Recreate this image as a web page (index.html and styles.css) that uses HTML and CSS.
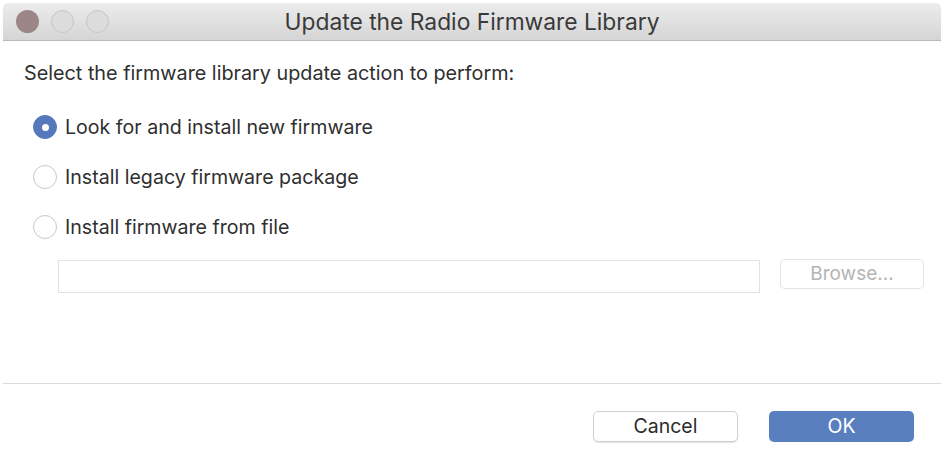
FILE: index.html
```html
<!DOCTYPE html>
<html>
<head>
<meta charset="utf-8">
<link rel="stylesheet" href="styles.css">
</head>
<body>
<div class="window">
  <div class="titlebar">
    <div class="lights">
      <span class="light red"></span>
      <span class="light gray"></span>
      <span class="light gray"></span>
    </div>
    <div class="title">Update the Radio Firmware Library</div>
  </div>
  <div class="content">
    <p class="prompt">Select the firmware library update action to perform:</p>
    <div class="options">
      <label class="option"><span class="radio checked"></span>Look for and install new firmware</label>
      <label class="option"><span class="radio"></span>Install legacy firmware package</label>
      <label class="option"><span class="radio"></span>Install firmware from file</label>
    </div>
    <div class="filerow">
      <div class="field"></div>
      <div class="browse">Browse...</div>
    </div>
  </div>
  <div class="separator"></div>
  <div class="footer">
    <div class="btn cancel">Cancel</div>
    <div class="btn ok">OK</div>
  </div>
</div>
</body>
</html>
```
FILE: styles.css
```css
html, body {
  margin: 0;
  padding: 0;
  background: #ffffff;
}
body {
  width: 945px;
  height: 474px;
  overflow: hidden;
  font-family: Inter, "Liberation Sans", Arial, sans-serif;
  color: #2b2b2b;
}
.window {
  margin: 3px 4px 0 3px;
  height: 471px;
  display: flex;
  flex-direction: column;
}
.titlebar {
  height: 37px;
  background: linear-gradient(#ececec, #d5d5d5);
  border-bottom: 1px solid #b9b9b9;
  border-radius: 5px 5px 0 0;
  display: flex;
  align-items: center;
  position: relative;
}
.lights {
  display: flex;
  gap: 12px;
  padding-left: 13px;
}
.light {
  width: 23px;
  height: 23px;
  border-radius: 50%;
  box-sizing: border-box;
}
.light.red {
  background: #9c8788;
}
.light.gray {
  background: #dcdcdc;
  border: 1px solid #c6c6c6;
}
.title {
  position: absolute;
  left: 0;
  right: 0;
  top: 0;
  line-height: 38px;
  text-align: center;
  font-size: 22.8px;
  color: #3a3a3a;
  pointer-events: none;
}
.content {
  padding: 20px 0 0 21px;
  height: 342px;
  box-sizing: border-box;
}
.prompt {
  margin: 0;
  font-size: 19.8px;
  line-height: 24px;
  color: #2f2f2f;
}
.options {
  margin-top: 30px;
  display: flex;
  flex-direction: column;
  gap: 26px;
}
.option {
  display: flex;
  align-items: center;
  gap: 8px;
  font-size: 19.6px;
  line-height: 24px;
  color: #2f2f2f;
  padding-left: 9px;
}
.radio {
  width: 24px;
  height: 24px;
  border-radius: 50%;
  box-sizing: border-box;
  border: 1px solid #c8c8c8;
  background: #ffffff;
  display: flex;
  align-items: center;
  justify-content: center;
}
.radio.checked {
  background: #5679bd;
  border-color: #5679bd;
}
.radio.checked::after {
  content: "";
  width: 7px;
  height: 7px;
  border-radius: 50%;
  background: #ffffff;
}
.filerow {
  margin-top: 21px;
  display: flex;
  align-items: flex-start;
  padding-left: 34px;
  gap: 20px;
}
.field {
  width: 702px;
  height: 33px;
  box-sizing: border-box;
  border: 1px solid #e2e2e2;
}
.browse {
  width: 144px;
  height: 30px;
  margin-top: -1px;
  box-sizing: border-box;
  border: 1px solid #e2e2e2;
  border-radius: 5px;
  text-align: center;
  line-height: 28px;
  font-size: 19px;
  color: #b4b4b4;
}
.separator {
  height: 0;
  border-top: 1px solid #dcdcdc;
}
.footer {
  display: flex;
  justify-content: flex-end;
  gap: 31px;
  padding: 27px 27px 0 0;
}
.btn {
  width: 145px;
  height: 31px;
  box-sizing: border-box;
  border-radius: 5px;
  text-align: center;
  font-size: 19.5px;
  line-height: 31px;
}
.btn.cancel {
  border: 1px solid #d0d0d0;
  box-shadow: 0 1px 1px rgba(0,0,0,0.12);
  color: #2b2b2b;
  line-height: 29px;
}
.btn.ok {
  background: #5a7fbf;
  color: #ffffff;
}
```
